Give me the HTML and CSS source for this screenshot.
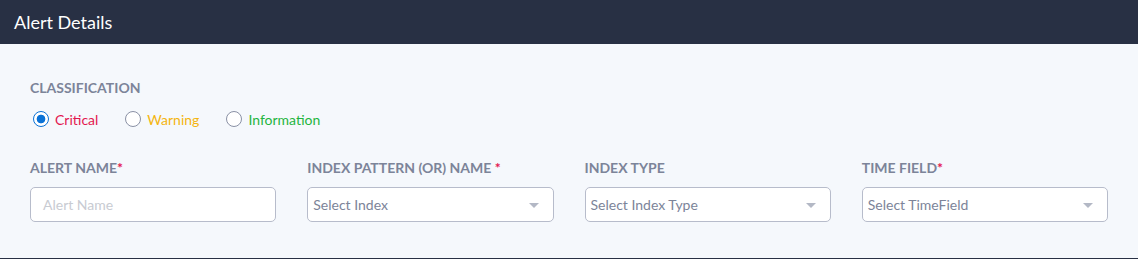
FILE: index.html
```html
<!DOCTYPE html>
<html lang="en">
<head>
    <meta charset="UTF-8">
    <title>Alert Details</title>
    <link rel="stylesheet" href="styles.css">
</head>
<body>
    <div class="panel">
        <div class="panel-header">Alert Details</div>
        <div class="panel-body">
            <div class="section-label">CLASSIFICATION</div>
            <div class="radio-row">
                <label class="radio critical"><span class="dot checked"></span>Critical</label>
                <label class="radio warning"><span class="dot"></span>Warning</label>
                <label class="radio info"><span class="dot"></span>Information</label>
            </div>
            <div class="fields">
                <div class="field">
                    <div class="field-label">ALERT NAME<span class="req">*</span></div>
                    <div class="input placeholder">Alert Name</div>
                </div>
                <div class="field">
                    <div class="field-label">INDEX PATTERN (OR) NAME <span class="req">*</span></div>
                    <div class="input select">Select Index<span class="caret"></span></div>
                </div>
                <div class="field">
                    <div class="field-label">INDEX TYPE</div>
                    <div class="input select">Select Index Type<span class="caret"></span></div>
                </div>
                <div class="field">
                    <div class="field-label">TIME FIELD<span class="req">*</span></div>
                    <div class="input select">Select TimeField<span class="caret"></span></div>
                </div>
            </div>
        </div>
    </div>
</body>
</html>
```

FILE: styles.css
```css
body {
    margin: 0;
    font-family: Lato, "Noto Sans", sans-serif;
    background-color: #f5f8fc;
}
.panel {
    height: 258px;
    border-bottom: 1px solid #283044;
    background-color: #f5f8fc;
}
.panel-header {
    height: 44px;
    background-color: #283044;
    color: #ffffff;
    font-size: 18px;
    line-height: 44px;
    padding-left: 14px;
}
.panel-body {
    padding: 35px 30px 0 30px;
}
.section-label, .field-label {
    font-size: 14px;
    font-weight: bold;
    color: #7c8499;
    line-height: 17px;
}
.radio-row {
    display: flex;
    margin-top: 12px;
    height: 22px;
    align-items: center;
}
.radio {
    display: flex;
    align-items: center;
    font-size: 14px;
    margin-right: 24px;
}
.dot {
    width: 14px;
    height: 14px;
    border: 1px solid #8a91a5;
    border-radius: 50%;
    background: #fff;
    margin: 0 6px 0 3px;
    box-sizing: content-box;
}
.dot.checked {
    border-color: #0a72d6;
    background: radial-gradient(circle, #0a72d6 0, #0a72d6 4px, #fff 4.7px);
}
.critical { color: #e3174f; }
.warning { color: #f4b510; }
.info { color: #1fb53f; }
.fields {
    display: flex;
    gap: 31px;
    margin-top: 29px;
}
.field {
    width: 247px;
}
.field-label {
    margin-bottom: 11px;
}
.req {
    color: #e3174f;
}
.input {
    height: 35px;
    border: 1px solid #b7bccb;
    border-radius: 5px;
    background: #fff;
    box-sizing: border-box;
    font-size: 14px;
    line-height: 33px;
    color: #7c8499;
    padding-left: 5px;
    position: relative;
}
.input.placeholder {
    color: #c8cbd2;
    padding-left: 12px;
}
.caret {
    position: absolute;
    right: 14px;
    top: 15px;
    border-left: 5px solid transparent;
    border-right: 5px solid transparent;
    border-top: 5px solid #b3b8c5;
}
```
